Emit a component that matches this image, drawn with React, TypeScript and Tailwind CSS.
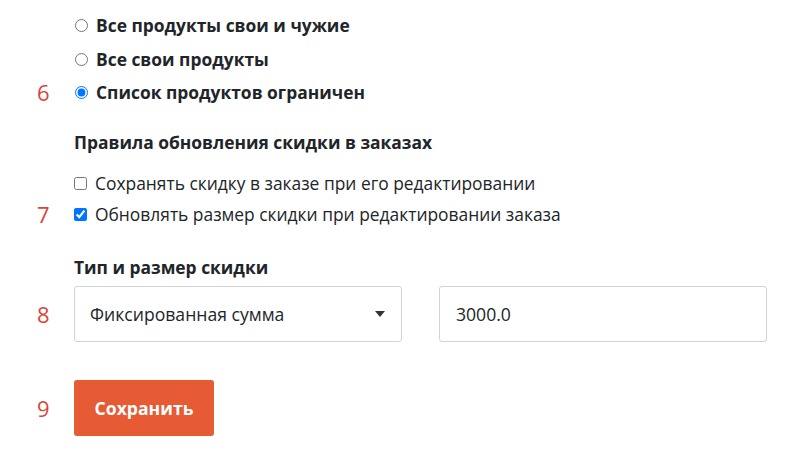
import React from "react";

const Num = ({ n }: { n?: string }) => (
  <div className="w-[74px] shrink-0 pl-[37px] text-[22px] leading-none text-[#d9453b]">{n}</div>
);

export default function App() {
  return (
    <div
      className="w-[800px] h-[469px] bg-white text-[#212529] overflow-hidden"
      style={{ fontFamily: '"Open Sans", sans-serif' }}
    >
      <div className="pt-[14px]">
        <div className="flex items-center h-[22px]">
          <Num />
          <label className="flex items-center font-bold text-[17.4px]">
            <input type="radio" name="p" className="w-[13px] h-[13px] m-0 mr-[8px] ml-[1px]" />
            Все продукты свои и чужие
          </label>
        </div>
        <div className="flex items-center h-[22px] mt-[12px]">
          <Num />
          <label className="flex items-center font-bold text-[17.4px]">
            <input type="radio" name="p" className="w-[13px] h-[13px] m-0 mr-[8px] ml-[1px]" />
            Все свои продукты
          </label>
        </div>
        <div className="flex items-center h-[22px] mt-[11px]">
          <Num n="6" />
          <label className="flex items-center font-bold text-[17.4px]">
            <input type="radio" name="p" defaultChecked className="w-[13px] h-[13px] m-0 mr-[8px] ml-[1px]" />
            Список продуктов ограничен
          </label>
        </div>

        <div className="flex items-center h-[22px] mt-[28px]">
          <Num />
          <div className="font-bold text-[17.4px]">Правила обновления скидки в заказах</div>
        </div>

        <div className="flex items-center h-[22px] mt-[19px]">
          <Num />
          <label className="flex items-center text-[17.4px]">
            <input type="checkbox" className="w-[13px] h-[13px] m-0 mr-[8px]" />
            Сохранять скидку в заказе при его редактировании
          </label>
        </div>
        <div className="flex items-center h-[22px] mt-[9px]">
          <Num n="7" />
          <label className="flex items-center text-[17.4px]">
            <input type="checkbox" defaultChecked className="w-[13px] h-[13px] m-0 mr-[8px]" />
            Обновлять размер скидки при редактировании заказа
          </label>
        </div>

        <div className="flex items-center h-[22px] mt-[31px]">
          <Num />
          <div className="font-bold text-[17.4px]">Тип и размер скидки</div>
        </div>

        <div className="flex items-center mt-[8px]">
          <Num n="8" />
          <div className="flex gap-[37px]">
            <div className="w-[328px] h-[56px] border border-[#ced4da] rounded-[3px] flex items-center justify-between pl-[15px] pr-[16px] text-[17.6px]">
              <span>Фиксированная сумма</span>
              <svg width="10" height="6" viewBox="0 0 10 6">
                <path d="M0 0 L10 0 L5 6 Z" fill="#333" />
              </svg>
            </div>
            <div className="w-[328px] h-[56px] border border-[#ced4da] rounded-[3px] flex items-center pl-[16px] text-[17.6px]">
              3000.0
            </div>
          </div>
        </div>

        <div className="flex items-center mt-[38px]">
          <Num n="9" />
          <button className="w-[140px] h-[56px] bg-[#e65a34] rounded-[3px] text-white font-bold text-[17.6px]">
            Сохранить
          </button>
        </div>
      </div>
    </div>
  );
}
